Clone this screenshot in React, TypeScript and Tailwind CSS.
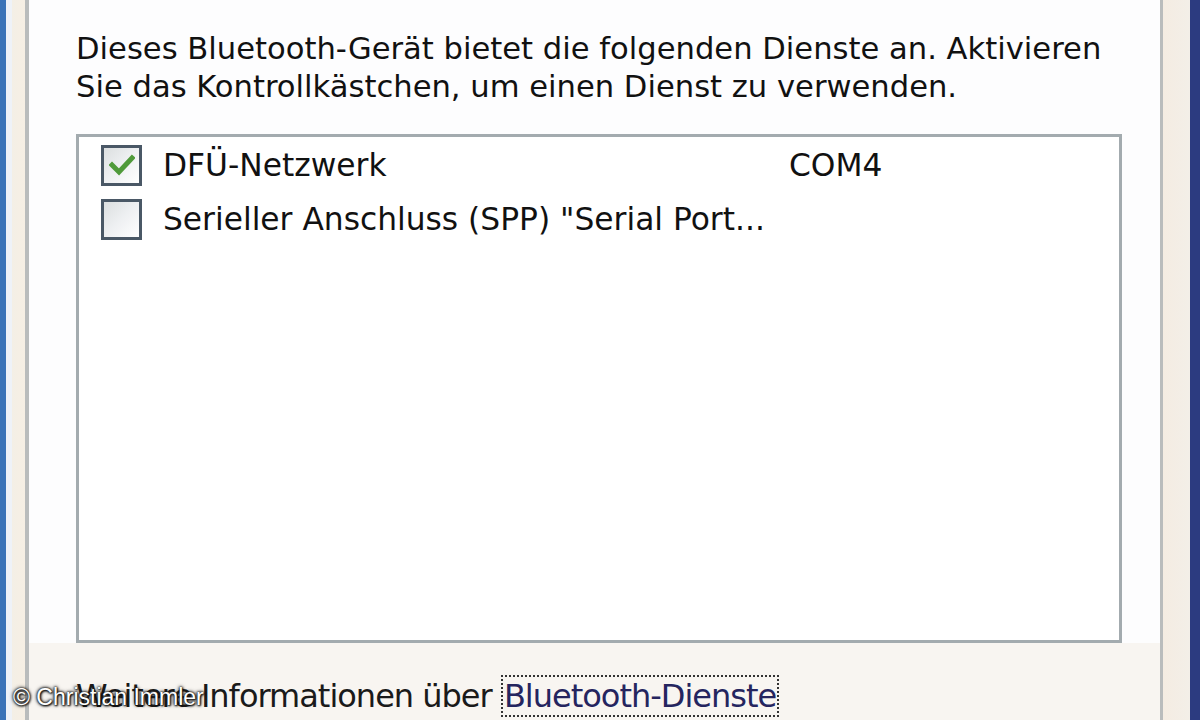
import React from "react";

const font = { fontFamily: '"DejaVu Sans", Verdana, sans-serif' };

function CheckBox({ checked }: { checked?: boolean }) {
  return (
    <div className="w-[41px] h-[41px] border-[3px] border-[#4a5866] bg-gradient-to-br from-[#dcdfe0] via-[#eef0f2] to-white flex items-center justify-center shrink-0">
      {checked && (
        <svg width="26" height="22" viewBox="0 0 26 22">
          <path d="M3 11 L10 18 L23 4" stroke="#4f9a3a" strokeWidth="5" fill="none" strokeLinecap="square" strokeLinejoin="miter" />
        </svg>
      )}
    </div>
  );
}

export default function App() {
  return (
    <div className="relative w-[1200px] h-[720px] overflow-hidden flex bg-white" style={font}>
      {/* left window frame */}
      <div className="w-[6px] bg-[#3a73b8] shrink-0" />
      <div className="w-[6px] bg-[#eef2f8] shrink-0" />
      <div className="w-[13px] bg-gradient-to-r from-[#f3efe6] to-[#f6efe4] shrink-0" />
      <div className="w-[4px] bg-[#b9bcbc] shrink-0" />

      {/* tab page */}
      <div className="flex-1 flex flex-col bg-white">
        <div className="flex-1 flex flex-col pl-[47px] pr-[38px] bg-[#fdfdfe]">
          <p className="pt-[30px] text-[30.6px] leading-[38px] text-[#111] whitespace-nowrap">
            Dieses Bluetooth-Gerät bietet die folgenden Dienste an. Aktivieren
            <br />
            Sie das Kontrollkästchen, um einen Dienst zu verwenden.
          </p>
          <div className="mt-[28px] h-[509px] border-[3px] border-[#a3abaf] bg-white pt-[1px]">
            <div className="h-[54px] flex items-center pl-[22px] text-[31.3px] text-[#111]">
              <CheckBox checked />
              <span className="ml-[21px] w-[626px]">DFÜ-Netzwerk</span>
              <span>COM4</span>
            </div>
            <div className="h-[54px] flex items-center pl-[22px] text-[31.3px] text-[#111]">
              <CheckBox />
              <span className="ml-[21px]">Serieller Anschluss (SPP) "Serial Port...</span>
            </div>
          </div>
        </div>
        <div className="h-[77px] bg-[#f8f5f1] pl-[47px] flex items-start pt-[33px]">
          <span className="text-[32px] leading-[40px] text-[#1a1a1a] tracking-[-1px] whitespace-nowrap">
            Weitere Informationen über{" "}
            <span className="text-[#25255f] border-[2px] border-dotted border-[#333] px-[1px]">Bluetooth-Dienste</span>
          </span>
        </div>
      </div>

      {/* right window frame */}
      <div className="w-[3px] bg-[#b9bcbc] shrink-0" />
      <div className="w-[27px] bg-gradient-to-r from-[#f4ece2] to-[#f3efe8] shrink-0" />
      <div className="w-[10px] bg-[#2c3b80] shrink-0" />

      {/* watermark */}
      <div
        className="absolute left-[13px] top-[684px] text-[23px] leading-[26px] text-white whitespace-nowrap"
        style={{
          fontFamily: '"Liberation Sans", Arial, sans-serif',
          textShadow: "0 0 2px #111, 0 0 3px #111, 0 0 4px #333, 1px 1px 2px #000",
        }}
      >
        © Christian Immler
      </div>
    </div>
  );
}
